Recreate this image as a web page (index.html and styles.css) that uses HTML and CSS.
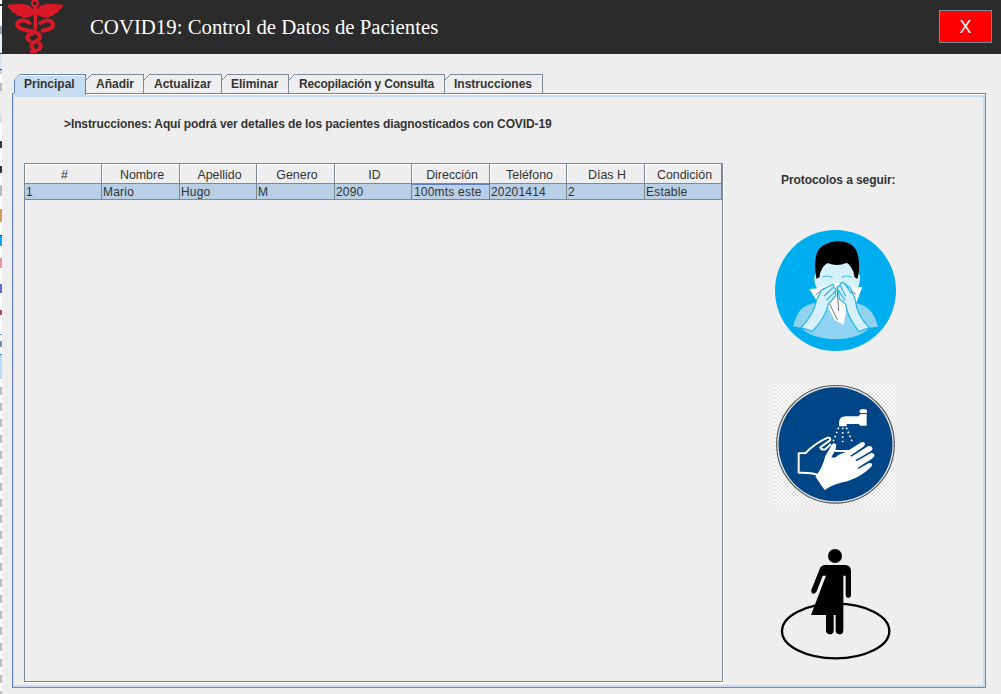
FILE: index.html
```html
<!DOCTYPE html>
<html lang="es">
<head>
<meta charset="utf-8">
<title>COVID19: Control de Datos de Pacientes</title>
<link rel="stylesheet" href="styles.css">
</head>
<body>
<div class="edge"></div>
<div class="window">
  <header class="header">
    <svg class="logo" viewBox="18 0 180 162" fill="none" stroke="#da1827" stroke-linecap="round">
      <circle cx="105" cy="10" r="9" stroke-width="7"/>
      <path fill="#da1827" stroke="none" d="M99 20H111V29C120 10 145 10 189 14C190 21 184 26 179 28C179 35 172 39 166 40C163 46 157 49 150 49C144 55 133 54 125 51L111 44V86L106 92L101 86V44L88 51C80 54 69 55 62 49C55 49 49 46 46 40C39 39 33 35 33 28C28 26 22 22 24 14C65 10 90 10 99 29Z"/>
      <path stroke-width="12" d="M88 69C78 60 60 58 53 68C46 83 66 88 86 92C112 96 124 104 119 115C114 126 92 124 95 139Q98 147 106 154"/>
      <path stroke-width="12" d="M122 69C132 60 150 58 157 68C165 83 148 88 128 92M95 102C80 105 78 115 88 122M119 132Q127 140 116 148M95 156L98 154"/>
    </svg>
    <h1 class="title">COVID19: Control de Datos de Pacientes</h1>
    <button class="close">X</button>
  </header>
  <nav class="tabs">
    <div class="tab selected"><svg class="corner" viewBox="0 0 6 6"><path d="M0 6L6 0"/></svg><span>Principal</span></div>
    <div class="tab t2"><svg class="corner" viewBox="0 0 6 6"><path d="M0 6L6 0"/></svg><span>Añadir</span></div>
    <div class="tab t3"><svg class="corner" viewBox="0 0 6 6"><path d="M0 6L6 0"/></svg><span>Actualizar</span></div>
    <div class="tab t4"><svg class="corner" viewBox="0 0 6 6"><path d="M0 6L6 0"/></svg><span>Eliminar</span></div>
    <div class="tab t5"><svg class="corner" viewBox="0 0 6 6"><path d="M0 6L6 0"/></svg><span>Recopilación y Consulta</span></div>
    <div class="tab t6"><svg class="corner" viewBox="0 0 6 6"><path d="M0 6L6 0"/></svg><span>Instrucciones</span></div>
  </nav>
  <main class="panel">
    <section class="records">
      <p class="intro">&gt;Instrucciones: Aquí podrá ver detalles de los pacientes diagnosticados con COVID-19</p>
      <div class="scroll">
        <div class="row head"><div>#</div><div>Nombre</div><div>Apellido</div><div>Genero</div><div>ID</div><div>Dirección</div><div>Teléfono</div><div>Días H</div><div>Condición</div></div>
        <div class="row data"><div>1</div><div>Mario</div><div>Hugo</div><div>M</div><div>2090</div><div class="focus">100mts este</div><div>20201414</div><div>2</div><div>Estable</div></div>
      </div>
    </section>
    <aside class="protocols">
      <h2>Protocolos a seguir:</h2>
      <svg class="pic" viewBox="30 30 363 363">
        <circle cx="211.500" cy="211.500" r="181.500" fill="#00aeef"/>
        <path fill="#8ed4f2" d="M85 319C94 275 114 252 157 248H267C309 252 330 282 339 320L313 323C274 369 149 368 108 323Z"/>
        <path fill="#d4f1fc" d="M148 169L163 140Q216 111 270 140L285 169Q286 193 276 206L252 244H178L157 207Q147 193 148 169Z"/>
        <path d="M155 177C149 153 148 119 157 97C172 56 260 50 275 94C284 120 285 153 277 177L268 171C267 153 258 138 246 128Q216 142 188 129C173 137 164 157 164 171Z"/>
        <path fill="none" stroke="#38b9ec" stroke-width="3" d="M171 171Q187 164 203 172M229 172Q244 164 260 171"/>
        <path fill="#fff" d="M133 207Q170 206 212 187Q251 206 292 200L274 248L247 253L236 314L209 301L186 255L155 242Z"/>
        <path fill="none" stroke="#777" stroke-width="3" d="M152 225L177 205M248 203L272 223M216 198L221 273M194 252L218 301"/>
        <g fill="#d4f1fc" stroke="#25b3ea" stroke-width="3.500" stroke-linejoin="round">
          <path d="M108 323Q145 286 155 240L169 211L200 194Q211 193 205 202L211 206Q216 212 211 218L213 227L190 252Q184 288 142 334Z"/>
          <path d="M313 323Q275 286 271 240L257 205L235 188Q227 185 225 195L218 202Q215 211 221 222L223 237L242 253Q247 290 282 335Z"/>
          <path fill="none" d="M205 202L177 228M211 214L184 241M225 196L242 229M220 210L240 242M240 192L259 220"/>
        </g>
      </svg>
      <svg class="pic wash" viewBox="30 27 363 363">
        <defs><pattern id="check" width="12" height="12" patternUnits="userSpaceOnUse"><path fill="#fff" d="M0 0H12V12H0Z"/><path fill="#e2e2e2" d="M0 0H6V6H0ZM6 6H12V12H6Z"/></pattern></defs>
        <rect x="30" y="27" width="363" height="363" fill="url(#check)"/>
        <circle cx="211.500" cy="208" r="176.500" fill="#e4e7ec" stroke="#555" stroke-width="3.500"/>
        <circle cx="211.500" cy="208" r="171" fill="#004586"/>
        <path fill="#fff" d="M284 105Q295 99 306 105V114H284ZM286 117H305V152H286L281 147H245V154H222V143Q223 124 242 124H281Z"/>
        <path fill="none" stroke="#fff" stroke-width="5" stroke-dasharray="5 8" d="M221 158L203 203M233 158V207M244 158L263 204"/>
        <path fill="none" stroke="#fff" stroke-width="6" stroke-linejoin="round" d="M161 302Q148 292 101 293V235L122 234Q151 204 188 188Q200 187 194 197L166 217Q169 226 181 223L198 207M210 228H260"/>
        <path fill="#fff" d="M151 304Q171 282 181 243L202 207Q209 201 214 209L211 226L199 247Q210 252 220 240L244 230L289 202Q298 199 300 207Q300 211 294 216L256 242L259 245L310 213Q321 212 323 221L318 228L271 256L275 259L319 233Q330 235 328 244L321 251L277 279L281 281L312 264Q323 262 321 273Q293 303 247 319Q204 327 179 345Q165 327 151 304Z"/>
      </svg>
      <svg class="pic distance" viewBox="30 18 363 363">
        <ellipse cx="212" cy="273" rx="161" ry="82" fill="none" stroke="#000" stroke-width="7"/>
        <path fill="#eee" d="M156 180H232V215H150Z"/>
        <circle cx="210" cy="48" r="21"/>
        <path d="M164 87Q168 75 181 75H241Q257 76 258 92V165Q257 174 249 174Q242 173 242 165V107H235V272Q234 283 223 283Q213 282 212 272V225H206V272Q205 283 194 283Q184 282 183 272V225H138L183 107H173L155 154Q151 163 143 161Q137 158 139 150Z"/>
      </svg>
    </aside>
  </main>
</div>
</body>
</html>
```
FILE: styles.css
```css
* { box-sizing: border-box; }
body { margin: 0; width: 1001px; height: 694px; overflow: hidden; display: flex; background: #eee; color: #333; font-family: "Liberation Sans", Arial, sans-serif; font-size: 12px; }
.edge { width: 2px; flex: none; background:
  linear-gradient(#fff 0 4px, #333 4px 6px, #fff 6px 26px, #99a5b0 26px 34px, #e8f2ff 34px 53px, #333 53px 54px, #d5e5fa 54px 69px, #345080 69px 70px, #ccc 70px 74px, #fff 74px 83px, #bbb 83px 91px, #eee 91px 115px, #ddd 115px 123px, #fff 123px 141px, #333 141px 148px, #fff 148px 166px, #333 166px 173px, #fff 173px 185px, #bbb 185px 196px, #fff 196px 209px, #d49b5a 209px 222px, #fff 222px 235px, #333 235px 236px, #00a8ff 236px 246px, #fff 246px 258px, #e597a5 258px 268px, #fff 268px 284px, #5870d8 284px 293px, #fff 293px 310px, #a85060 310px 315px, #fff 315px 334px, #5ba4d7 334px 335px, #fff 335px 341px, #6d91b4 341px 347px, #fff 347px 354px, #218bd0 354px 355px, #b7dbf3 355px 379px, #fff 379px 387px, transparent 387px),
  repeating-linear-gradient(#fff 0 3px, #bbb 3px 11px, #fff 11px 16px); }
.window { width: 999px; display: flex; flex-direction: column; }
.header { height: 54px; flex: none; display: flex; align-items: flex-start; background: #2b2b2b; padding: 0 9px 0 4px; }
.logo { width: 60px; height: 54px; }
.title { margin: 14px 0 0 24px; font: 20.8px/26px "Liberation Serif", "Times New Roman", serif; color: #fff; white-space: nowrap; }
.close { margin: 10px 0 0 auto; width: 53px; height: 33px; padding: 0; border: 1px solid #7a8a99; background: #f00; color: #fff; font: 18px/30px "Liberation Sans", sans-serif; }
.tabs { height: 19px; margin: 20px 0 0 12px; flex: none; display: flex; font-weight: bold; }
.tab { height: 19px; flex: none; display: flex; border-right: 1px solid #7a8a99; background: linear-gradient(#7a8a99, #7a8a99) 6px 0 / 100% 1px no-repeat; white-space: nowrap; line-height: 20px; }
.tab span { margin-left: 4px; }
.corner { width: 6px; height: 6px; flex: none; fill: none; stroke: #7a8a99; }
.selected { width: 72px; height: 21px; position: relative; z-index: 1; border-right: 1px solid #6382bf; background: linear-gradient(#6382bf, #6382bf) 0 6px / 1px 13px no-repeat, linear-gradient(#6382bf, #6382bf) 6px 0 / 100% 1px no-repeat, linear-gradient(#fff, #fff) 6px 1px / 100% 1px no-repeat, #c8ddf2; clip-path: polygon(6px 0, 100% 0, 100% 100%, 0 100%, 0 6px); }
.selected .corner { stroke: #6382bf; }
.t2 { width: 58px; } .t3 { width: 78px; } .t4 { width: 67px; } .t5 { width: 156px; } .t6 { width: 98px; }
.t4 span, .t6 span { margin-left: 3px; }
.t5 span { letter-spacing: -.19px; }
.panel { margin-left: 10px; width: 974px; height: 595px; flex: none; display: flex; border: 1px solid #6382bf; border-right-color: #7a8a99; border-bottom-color: #7a8a99; box-shadow: inset 0 1px #fff, inset 1px 0 #c8ddf2, inset 0 3px #c8ddf2, inset -2px -2px #c8ddf2; }
.records { padding-left: 11px; width: 710px; }
.intro { margin: 22px 0 0 40px; line-height: 16px; font-weight: bold; letter-spacing: -.1px; white-space: nowrap; }
.scroll { margin-top: 31px; width: 699px; height: 519px; border: 1px solid #7a8a99; box-shadow: 1px 1px #fff; }
.row { display: grid; grid-template-columns: 77px 78px 77px 78px 77px 78px 77px 78px 77px; white-space: nowrap; }
.row div { border-right: 1px solid #7a8a99; border-bottom: 1px solid #7a8a99; }
.head div { height: 20px; line-height: 22px; padding-left: 3px; text-align: center; font-size: 12.4px; box-shadow: inset 1px 1px #fff; }
.data div { height: 16px; line-height: 17px; padding-left: 1px; background: #b8cfe5; letter-spacing: .2px; }
.data .focus { margin-left: -1px; padding-left: 2px; border: 1px solid #6382bf; line-height: 15px; }
.protocols { width: 262px; padding: 78px 0 0 52px; }
.protocols h2 { margin: 0 0 42px 6px; font-size: 12px; line-height: 16px; letter-spacing: -.08px; white-space: nowrap; }
.pic { display: block; width: 121px; height: 121px; }
.wash { margin-top: 33px; }
.distance { margin-top: 41px; }
```
